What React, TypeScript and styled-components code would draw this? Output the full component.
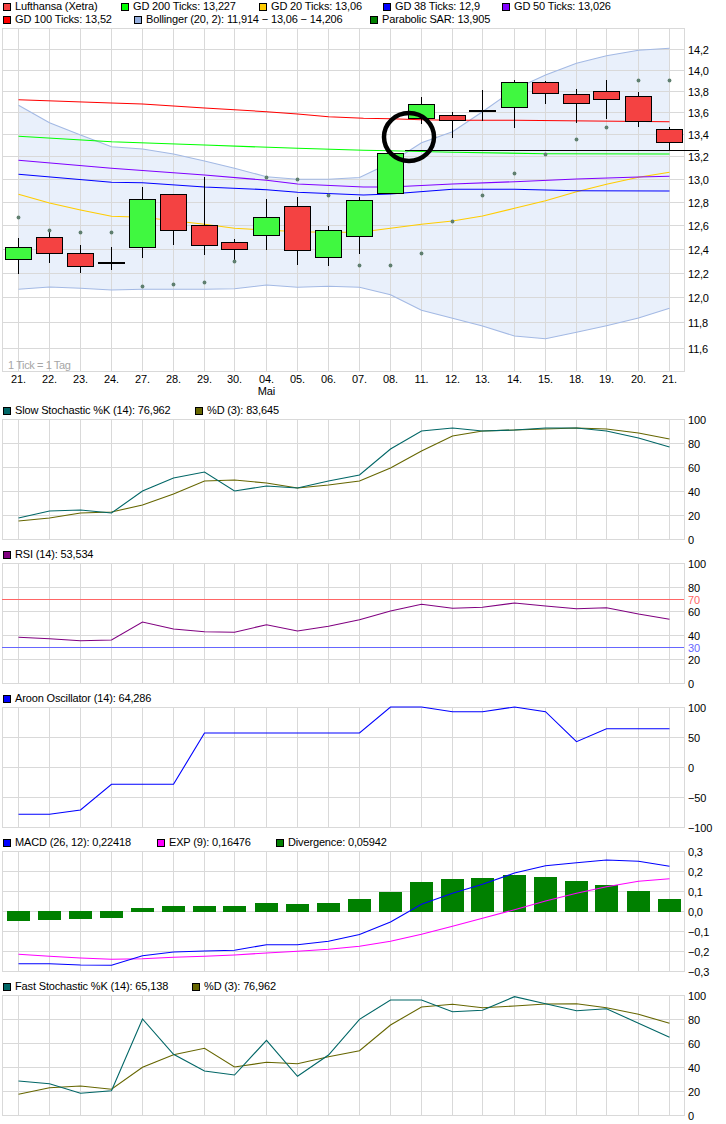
import React from 'react'
import styled, { createGlobalStyle } from 'styled-components'

const GlobalStyle = createGlobalStyle`
  html, body {
    margin: 0;
    padding: 0;
    background: #ffffff;
  }
`

// x of every trading day, y values below are page pixels read from the chart
const X = [18, 49, 80, 111, 142, 173, 204, 234, 266, 297, 328, 359, 390, 421, 452, 482, 514, 545, 576, 606, 638, 669]
const DAYS = ['21.', '22.', '23.', '24.', '27.', '28.', '29.', '30.', '04.', '05.', '06.', '07.', '08.', '11.', '12.', '13.', '14.', '15.', '18.', '19.', '20.', '21.']
const LEFT = 2
const RIGHT = 684

const toPoints = (ys: number[]) => ys.map((y, i) => `${X[i] + 0.5},${y}`).join(' ')
const toFreePoints = (pts: number[][]) => pts.map(([x, y]) => `${x + 0.5},${y}`).join(' ')

const CANDLES = [
  { top: 247, bottom: 259, high: 238, low: 274, up: true },
  { top: 237, bottom: 253, high: 230, low: 263, up: false },
  { top: 253, bottom: 266, high: 245, low: 273, up: false },
  { top: 262, bottom: 262, high: 247, low: 270, up: false },
  { top: 199, bottom: 247, high: 187, low: 258, up: true },
  { top: 194, bottom: 230, high: 194, low: 245, up: false },
  { top: 225, bottom: 245, high: 177, low: 255, up: false },
  { top: 242, bottom: 249, high: 239, low: 261, up: false },
  { top: 217, bottom: 235, high: 199, low: 250, up: true },
  { top: 206, bottom: 250, high: 197, low: 265, up: false },
  { top: 230, bottom: 257, high: 226, low: 266, up: true },
  { top: 200, bottom: 236, high: 197, low: 254, up: true },
  { top: 153, bottom: 193, high: 153, low: 193, up: true },
  { top: 104, bottom: 118, high: 97, low: 124, up: true },
  { top: 115, bottom: 120, high: 112, low: 138, up: false },
  { top: 110, bottom: 110, high: 90, low: 121, up: false },
  { top: 82, bottom: 107, high: 80, low: 128, up: true },
  { top: 82, bottom: 93, high: 81, low: 104, up: false },
  { top: 94, bottom: 103, high: 89, low: 123, up: false },
  { top: 91, bottom: 99, high: 80, low: 119, up: false },
  { top: 96, bottom: 121, high: 92, low: 127, up: false },
  { top: 129, bottom: 142, high: 127, low: 151, up: false },
]

const SAR = [217, 230, 232, 232, 286, 284, 282, 261, 177, 179, 195, 265, 265, 253, 221, 195, 173, 154, 139, 127, 80, 80]

const BOLL_UPPER = [105.3, 122.7, 135, 146.7, 149, 154, 161, 168.3, 176.7, 179.3, 179.3, 177.5, 162.7, 142.7, 131.7, 111.7, 89.3, 75, 63.3, 55.7, 50.3, 48.3]
const BOLL_LOWER = [289.3, 287, 288.3, 290, 289.3, 289.3, 289.3, 288.7, 285, 287.3, 286.3, 287.3, 294.7, 310.3, 318.3, 326, 336, 338.7, 332.3, 325.7, 318, 308.3]

const GD100 = [[18, 99.7], [111, 103], [142, 104], [173, 106], [204, 108], [266, 111.7], [297, 114], [328, 116.7], [363, 118.3], [390, 118.7], [421, 119.7], [452, 120.3], [514, 120.3], [669, 121.7]]
const GD200 = [[18, 136.3], [111, 141.7], [204, 145], [297, 148.3], [363, 150.3], [390, 150.7], [452, 152.3], [545, 153.7], [669, 154]]
const GD50 = [[18, 160.3], [111, 168.3], [204, 175], [266, 180.3], [297, 184], [363, 187], [390, 187], [452, 184], [514, 181.7], [576, 179], [638, 177], [669, 176.3]]
const GD38 = [[18, 174.3], [111, 182.3], [142, 182.7], [204, 187], [266, 189.7], [297, 192.3], [363, 195], [390, 194], [452, 189.3], [514, 189.3], [576, 190.7], [669, 191]]
const GD20 = [[18, 194.3], [49, 203], [80, 210], [111, 216.3], [142, 217.3], [204, 224.3], [234, 228.3], [266, 230], [297, 231.7], [328, 232.3], [359, 232.3], [390, 228.3], [421, 224.3], [452, 221], [482, 216], [514, 208.3], [545, 200.7], [576, 191.7], [606, 184.3], [638, 177.3], [669, 172.3]]

const SLOW_K = [518, 511, 510, 513, 491, 478, 472, 491, 486, 488, 481, 475, 449, 431, 428, 431, 430, 428, 428, 431, 438, 447]
const SLOW_D = [521, 518, 513, 512, 505, 494, 481, 480, 483, 488, 485, 481, 468, 451, 436, 431, 430, 429, 428, 429, 433, 439]
const RSI = [637.3, 638.7, 640.7, 640, 622, 629, 631.7, 632.3, 624.7, 631, 626.3, 619.7, 611, 604.3, 608.3, 607.3, 603, 606, 608.7, 607.7, 614, 619.3]
const AROON = [814.3, 814.3, 810, 784.3, 784.3, 784.3, 733, 733, 733, 733, 733, 733, 707, 707, 711.7, 711.7, 707, 711.7, 741.7, 728.7, 728.7, 728.7]
const MACD = [963.7, 963.7, 965, 965.3, 955.7, 952, 951, 950.3, 944.7, 944.7, 941.3, 934.5, 922, 904.3, 893.3, 884.3, 873, 865.7, 862.7, 860, 861.3, 866.3]
const EXP = [954.3, 956.3, 958, 959.3, 958.7, 957.3, 956.3, 955, 953, 951.3, 949.3, 946.3, 941.3, 934.3, 926.3, 918.3, 909.7, 901, 893.3, 886.7, 881.3, 878.7]
const DIVERGENCE = [921, 920, 919, 918, 908, 906, 906, 906, 903, 904, 903, 899, 892, 882, 879, 878, 875, 877, 881, 885, 891, 899]
const FAST_K = [1081, 1083.7, 1093.3, 1090.7, 1019, 1054.3, 1071, 1075, 1040.3, 1076.3, 1055, 1019.3, 1000, 1000, 1011.7, 1010.3, 996.7, 1003.7, 1010.7, 1008.7, 1023.3, 1037.3]
const FAST_D = [1094.3, 1087.7, 1086, 1089.3, 1067.3, 1054.7, 1048.3, 1067, 1062.3, 1063.7, 1056.7, 1050.7, 1025, 1007, 1004.3, 1007.7, 1006, 1004, 1003.7, 1007.7, 1014.3, 1023.3]

const PRICE_TICKS: [string, number][] = [
  ['14,2', 49], ['14,0', 70], ['13,8', 91], ['13,6', 112], ['13,4', 134], ['13,2', 156], ['13,0', 179],
  ['12,8', 202], ['12,6', 225], ['12,4', 249], ['12,2', 273], ['12,0', 297], ['11,8', 322], ['11,6', 348],
]

const percentTicks = (top: number): [string, number][] =>
  ['100', '80', '60', '40', '20', '0'].map((label, i) => [label, top + i * 24])

type LegendEntry = { color: string; label: string; width?: number }

function LegendLine({ entries }: { entries: LegendEntry[] }) {
  return (
    <LegendRow>
      {entries.map((entry) => (
        <LegendItem key={entry.label} $width={entry.width}>
          <Swatch $color={entry.color} />
          {entry.label}
        </LegendItem>
      ))}
    </LegendRow>
  )
}

type PlotProps = {
  top: number
  bottom: number
  viewHeight: number
  ticks: [string, number][]
  children?: React.ReactNode
  under?: React.ReactNode
}

function Plot({ top, bottom, viewHeight, ticks, children, under }: PlotProps) {
  return (
    <PlotSvg viewBox={`0 ${top} 726 ${viewHeight}`} width={726} height={viewHeight}>
      {under}
      <g shapeRendering="crispEdges">
        {ticks.map(([label, y]) => (
          <GridLine key={label} x1={LEFT} x2={RIGHT + 1} y1={y + 0.5} y2={y + 0.5} />
        ))}
        <GridLine x1={LEFT} x2={RIGHT + 1} y1={top + 0.5} y2={top + 0.5} />
        <GridLine x1={LEFT} x2={RIGHT + 1} y1={bottom + 0.5} y2={bottom + 0.5} />
        <GridLine x1={LEFT + 0.5} x2={LEFT + 0.5} y1={top} y2={bottom} />
        <GridLine x1={RIGHT + 0.5} x2={RIGHT + 0.5} y1={top} y2={bottom} />
        {X.map((x) => (
          <GridLine key={x} x1={x + 0.5} x2={x + 0.5} y1={top} y2={bottom} />
        ))}
      </g>
      {ticks.map(([label, y]) => (
        <AxisLabel key={label} x={688} y={y + 5}>{label}</AxisLabel>
      ))}
      {children}
    </PlotSvg>
  )
}

function PriceChart() {
  const band = `${toPoints(BOLL_UPPER)} ${[...BOLL_LOWER].reverse().map((y, i) => `${X[X.length - 1 - i] + 0.5},${y}`).join(' ')}`
  return (
    <Plot
      top={28}
      bottom={371}
      viewHeight={376}
      ticks={PRICE_TICKS}
      under={<polygon points={band} fill="#e9f0fb" />}
    >
      <DataLine points={toPoints(BOLL_UPPER)} $color="#a3b9e4" />
      <DataLine points={toPoints(BOLL_LOWER)} $color="#a3b9e4" />
      <DataLine points={toFreePoints(GD20)} $color="#ffcc00" />
      <DataLine points={toFreePoints(GD38)} $color="#0000ff" />
      <DataLine points={toFreePoints(GD50)} $color="#7f00ff" />
      <DataLine points={toFreePoints(GD200)} $color="#00ff00" />
      <DataLine points={toFreePoints(GD100)} $color="#ff0000" />

      <g shapeRendering="crispEdges">
        {CANDLES.map((c, i) => (
          <g key={i}>
            <Wick x1={X[i] + 0.5} x2={X[i] + 0.5} y1={c.high} y2={c.low} />
            {c.top === c.bottom ? (
              <Doji x={X[i] - 13} y={c.top} width={27} height={2} />
            ) : (
              <CandleBody
                x={X[i] - 12.5}
                y={c.top + 0.5}
                width={26}
                height={c.bottom - c.top}
                $up={c.up}
              />
            )}
          </g>
        ))}
      </g>

      {SAR.map((y, i) => (
        <SarDot key={i} cx={X[i] + 0.5} cy={y + 0.5} r={1.9} />
      ))}

      <Annotation x1={405} x2={699} y1={150.5} y2={150.5} shapeRendering="crispEdges" />
      <AnnotationRing cx={409} cy={137} rx={25} ry={24} />

      <TickNote x={8} y={369}>1 Tick = 1 Tag</TickNote>
      {DAYS.map((day, i) => (
        <DayLabel key={i} x={X[i] + 0.5} y={383}>{day}</DayLabel>
      ))}
      <DayLabel x={266.5} y={395}>Mai</DayLabel>
    </Plot>
  )
}

export default function App() {
  return (
    <Page>
      <GlobalStyle />
      <MainLegend>
        <LegendLine
          entries={[
            { color: '#f44242', label: 'Lufthansa (Xetra)', width: 118 },
            { color: '#00ff00', label: 'GD 200 Ticks: 13,227', width: 138 },
            { color: '#ffcc00', label: 'GD 20 Ticks: 13,06', width: 124 },
            { color: '#0000ff', label: 'GD 38 Ticks: 12,9', width: 119 },
            { color: '#7f00ff', label: 'GD 50 Ticks: 13,026' },
          ]}
        />
        <LegendLine
          entries={[
            { color: '#ff0000', label: 'GD 100 Ticks: 13,52', width: 131 },
            { color: '#94aede', label: 'Bollinger (20, 2): 11,914 − 13,06 − 14,206', width: 236 },
            { color: '#008000', label: 'Parabolic SAR: 13,905' },
          ]}
        />
      </MainLegend>
      <PriceChart />

      <IndicatorLegend>
        <LegendLine
          entries={[
            { color: '#006666', label: 'Slow Stochastic %K (14): 76,962', width: 192 },
            { color: '#666600', label: '%D (3): 83,645' },
          ]}
        />
      </IndicatorLegend>
      <Plot top={419} bottom={539} viewHeight={129} ticks={percentTicks(419)}>
        <DataLine points={toPoints(SLOW_D)} $color="#666600" />
        <DataLine points={toPoints(SLOW_K)} $color="#006666" />
      </Plot>

      <IndicatorLegend>
        <LegendLine entries={[{ color: '#800080', label: 'RSI (14): 53,534' }]} />
      </IndicatorLegend>
      <Plot top={563} bottom={683} viewHeight={129} ticks={percentTicks(563)}>
        <ThresholdLine x1={LEFT} x2={RIGHT} y1={599.5} y2={599.5} $color="#ff6666" />
        <ThresholdLine x1={LEFT} x2={RIGHT} y1={647.5} y2={647.5} $color="#6666ff" />
        <AxisLabel x={688} y={604} $color="#ff6666">70</AxisLabel>
        <AxisLabel x={688} y={652} $color="#6666ff">30</AxisLabel>
        <DataLine points={toPoints(RSI)} $color="#800080" />
      </Plot>

      <IndicatorLegend>
        <LegendLine entries={[{ color: '#0000ff', label: 'Aroon Oscillator (14): 64,286' }]} />
      </IndicatorLegend>
      <Plot
        top={707}
        bottom={827}
        viewHeight={129}
        ticks={[['100', 707], ['50', 737], ['0', 767], ['−50', 797], ['−100', 827]]}
      >
        <DataLine points={toPoints(AROON)} $color="#0000ff" />
      </Plot>

      <IndicatorLegend>
        <LegendLine
          entries={[
            { color: '#0000ff', label: 'MACD (26, 12): 0,22418', width: 154 },
            { color: '#ff00ff', label: 'EXP (9): 0,16476', width: 119 },
            { color: '#008000', label: 'Divergence: 0,05942' },
          ]}
        />
      </IndicatorLegend>
      <Plot
        top={851}
        bottom={971}
        viewHeight={129}
        ticks={[['0,3', 851], ['0,2', 871], ['0,1', 891], ['0,0', 911], ['−0,1', 931], ['−0,2', 951], ['−0,3', 971]]}
      >
        <g shapeRendering="crispEdges">
          {DIVERGENCE.map((y, i) => (
            <DivergenceBar
              key={i}
              x={X[i] - 11}
              y={Math.min(y, 911)}
              width={23}
              height={y < 911 ? 912 - y : y - 911}
            />
          ))}
        </g>
        <DataLine points={toPoints(EXP)} $color="#ff00ff" />
        <DataLine points={toPoints(MACD)} $color="#0000ff" />
      </Plot>

      <IndicatorLegend>
        <LegendLine
          entries={[
            { color: '#006666', label: 'Fast Stochastic %K (14): 65,138', width: 189 },
            { color: '#666600', label: '%D (3): 76,962' },
          ]}
        />
      </IndicatorLegend>
      <Plot top={995} bottom={1115} viewHeight={129} ticks={percentTicks(995)}>
        <DataLine points={toPoints(FAST_D)} $color="#666600" />
        <DataLine points={toPoints(FAST_K)} $color="#006666" />
      </Plot>
    </Page>
  )
}

const Page = styled.div`
  width: 726px;
  height: 1124px;
  overflow: hidden;
  background: #ffffff;
  font-family: 'Liberation Sans', Arial, sans-serif;
  font-size: 11px;
  letter-spacing: -0.15px;
  color: #000000;
`

const MainLegend = styled.div`
  height: 28px;
  padding-left: 3px;
  box-sizing: border-box;
`

const IndicatorLegend = styled.div`
  height: 15px;
  padding-left: 3px;
  box-sizing: border-box;
`

const LegendRow = styled.div`
  display: flex;
  height: 13px;
  align-items: center;
`

const LegendItem = styled.div<{ $width?: number }>`
  display: flex;
  flex-shrink: 0;
  align-items: center;
  gap: 4px;
  width: ${(p) => (p.$width ? `${p.$width}px` : 'auto')};
  line-height: 13px;
  white-space: nowrap;
`

const Swatch = styled.span<{ $color: string }>`
  display: block;
  box-sizing: border-box;
  width: 8px;
  height: 8px;
  border: 1px solid #000000;
  background: ${(p) => p.$color};
`

const PlotSvg = styled.svg`
  display: block;
  overflow: visible;
`

const GridLine = styled.line`
  stroke: #d9d9d9;
  stroke-width: 1;
`

const AxisLabel = styled.text<{ $color?: string }>`
  fill: ${(p) => p.$color ?? '#000000'};
`

const DayLabel = styled.text`
  fill: #000000;
  text-anchor: middle;
`

const TickNote = styled.text`
  fill: #a6a6a6;
  letter-spacing: -0.4px;
`

const DataLine = styled.polyline<{ $color: string }>`
  fill: none;
  stroke: ${(p) => p.$color};
  stroke-width: 1.1;
`

const ThresholdLine = styled.line<{ $color: string }>`
  stroke: ${(p) => p.$color};
  stroke-width: 1;
  shape-rendering: crispEdges;
`

const Wick = styled.line`
  stroke: #000000;
  stroke-width: 1;
`

const Doji = styled.rect`
  fill: #000000;
`

const CandleBody = styled.rect<{ $up: boolean }>`
  fill: ${(p) => (p.$up ? '#40f840' : '#f44242')};
  stroke: #000000;
  stroke-width: 1;
`

const SarDot = styled.circle`
  fill: #5f7f6f;
`

const Annotation = styled.line`
  stroke: #000000;
  stroke-width: 1;
`

const AnnotationRing = styled.ellipse`
  fill: none;
  stroke: #000000;
  stroke-width: 4.5;
`

const DivergenceBar = styled.rect`
  fill: #008000;
`
